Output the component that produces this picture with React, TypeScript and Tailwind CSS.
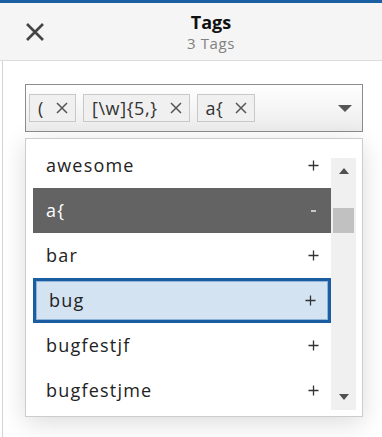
const tags = ["(", "[\\w]{5,}", "a{"];

interface Row {
  label: string;
  state: "normal" | "chosen" | "focused";
}

const rows: Row[] = [
  { label: "awesome", state: "normal" },
  { label: "a{", state: "chosen" },
  { label: "bar", state: "normal" },
  { label: "bug", state: "focused" },
  { label: "bugfestjf", state: "normal" },
  { label: "bugfestjme", state: "normal" },
];

function Caret({ up = false }: { up?: boolean }) {
  return (
    <svg width="10" height="6" viewBox="0 0 10 6" className="text-[#505050]">
      <path d={up ? "M0 6 L5 0 L10 6 Z" : "M0 0 L10 0 L5 6 Z"} fill="currentColor" />
    </svg>
  );
}

function Cross() {
  return (
    <svg width="12" height="12" viewBox="0 0 12 12" className="text-[#555]">
      <path d="M1 1 L11 11 M11 1 L1 11" stroke="currentColor" strokeWidth="1.5" />
    </svg>
  );
}

export default function App() {
  return (
    <div className="flex h-[437px] w-[382px] flex-col overflow-hidden bg-white font-['Open_Sans',sans-serif] text-[#222]">
      <div className="h-[3px] bg-[#1b5fa3]" />

      {/* Header */}
      <div className="flex h-[58px] items-center border-b border-[#dcdcdc] bg-[#f5f5f5]">
        <button className="flex w-[70px] justify-center text-[#444]">
          <svg width="20" height="20" viewBox="0 0 20 20">
            <path d="M2 2 L18 18 M18 2 L2 18" stroke="currentColor" strokeWidth="2.6" />
          </svg>
        </button>
        <div className="flex flex-1 flex-col items-center pr-[30px]">
          <span className="text-[18px] font-bold leading-[22px] text-[#111]">Tags</span>
          <span className="text-[15px] leading-[20px] tracking-[0.6px] text-[#808080]">3 Tags</span>
        </div>
      </div>

      {/* Body */}
      <div className="flex flex-1 pl-[2px]">
        <div className="flex-1 border-l border-[#d4d4d4] pl-[22px] pr-[19px] pt-[23px]">
          {/* Select */}
          <div className="flex h-[48px] items-center border border-[#8c8c8c] bg-gradient-to-b from-white to-[#ececec] pl-[3px] pr-[10px]">
            <div className="flex flex-1 gap-[7px]">
              {tags.map((t) => (
                <div
                  key={t}
                  className="flex h-[28px] items-center gap-[12px] border border-[#c8c8c8] bg-[#f0f0f0] pl-[8px] pr-[7px] text-[18px] tracking-[0.6px] text-[#333]"
                >
                  <span>{t}</span>
                  <Cross />
                </div>
              ))}
            </div>
            <svg width="14" height="7" viewBox="0 0 14 7" className="text-[#555]">
              <path d="M0 0 L14 0 L7 7 Z" fill="currentColor" />
            </svg>
          </div>

          {/* Dropdown */}
          <div className="mt-[6px] flex h-[279px] border border-[#cccccc] bg-white pb-[3px] pl-[7px] pr-[6px] pt-[4px] shadow-[0_6px_24px_rgba(0,0,0,0.14)]">
            <div className="flex flex-1 flex-col">
              {rows.map((r) => (
                <div
                  key={r.label}
                  className={`flex h-[45px] shrink-0 items-center justify-between pl-[13px] pr-[12px] text-[18px] tracking-[1.2px] ${
                    r.state === "chosen"
                      ? "bg-[#636363] text-white"
                      : r.state === "focused"
                        ? "border-[3px] border-[#1a5da0] bg-[#d3e3f2] pl-[10px] pr-[9px] shadow-[inset_0_0_0_1px_#8fb4d8]"
                        : "text-[#222]"
                  }`}
                >
                  <span>{r.label}</span>
                  {r.state === "chosen" ? (
                    <svg width="11" height="11" viewBox="0 0 11 11" className="text-white">
                      <path d="M3 6 L8 6" stroke="currentColor" strokeWidth="1.3" />
                    </svg>
                  ) : (
                    <svg width="11" height="11" viewBox="0 0 11 11" className="text-[#333]">
                      <path d="M0.5 5.5 L10.5 5.5 M5.5 0.5 L5.5 10.5" stroke="currentColor" strokeWidth="1.3" />
                    </svg>
                  )}
                </div>
              ))}
            </div>
            <div className="mt-[15px] mb-[3px] flex w-[25px] flex-col items-center bg-[#f0f0f0] px-[2px]">
              <div className="flex h-[26px] items-center">
                <Caret up />
              </div>
              <div className="mt-[24px] h-[25px] w-full bg-[#c1c1c1]" />
              <div className="flex-1" />
              <div className="pb-[10px]">
                <Caret />
              </div>
            </div>
          </div>
        </div>
      </div>
    </div>
  );
}
